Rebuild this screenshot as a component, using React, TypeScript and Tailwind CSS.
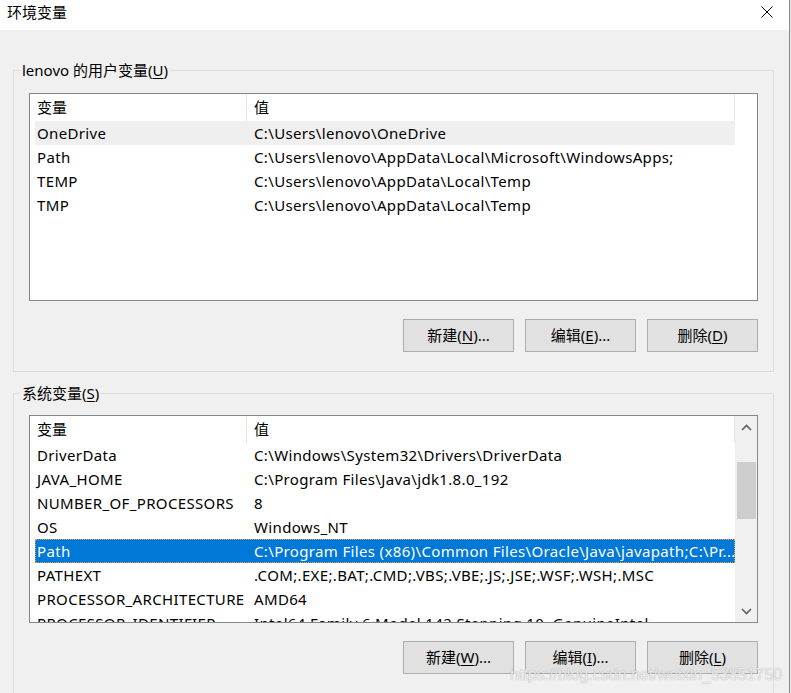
import React from 'react'

const font = { fontFamily: '"Noto Sans", "Noto Sans CJK SC", sans-serif' }

type Row = { name: string; value: string }

const userVars: Row[] = [
  { name: 'OneDrive', value: 'C:\\Users\\lenovo\\OneDrive' },
  { name: 'Path', value: 'C:\\Users\\lenovo\\AppData\\Local\\Microsoft\\WindowsApps;' },
  { name: 'TEMP', value: 'C:\\Users\\lenovo\\AppData\\Local\\Temp' },
  { name: 'TMP', value: 'C:\\Users\\lenovo\\AppData\\Local\\Temp' },
]

const sysVars: Row[] = [
  { name: 'DriverData', value: 'C:\\Windows\\System32\\Drivers\\DriverData' },
  { name: 'JAVA_HOME', value: 'C:\\Program Files\\Java\\jdk1.8.0_192' },
  { name: 'NUMBER_OF_PROCESSORS', value: '8' },
  { name: 'OS', value: 'Windows_NT' },
  { name: 'Path', value: 'C:\\Program Files (x86)\\Common Files\\Oracle\\Java\\javapath;C:\\Pr...' },
  { name: 'PATHEXT', value: '.COM;.EXE;.BAT;.CMD;.VBS;.VBE;.JS;.JSE;.WSF;.WSH;.MSC' },
  { name: 'PROCESSOR_ARCHITECTURE', value: 'AMD64' },
  { name: 'PROCESSOR_IDENTIFIER', value: 'Intel64 Family 6 Model 142 Stepping 10, GenuineIntel' },
]

function Btn({ label, hot, tail }: { label: string; hot: string; tail: string }) {
  return (
    <button className="w-[111px] h-[33px] bg-[#e1e1e1] border border-[#adadad] text-[15px] text-black flex items-center justify-center">
      {label}(<span className="underline underline-offset-2">{hot}</span>){tail}
    </button>
  )
}

function VarList({ rows, hover, selected, scroll }: { rows: Row[]; hover?: number; selected?: number; scroll?: boolean }) {
  return (
    <div className="w-[729px] h-[208px] border border-[#828790] bg-white flex overflow-hidden">
      <div className="w-[705px] flex flex-col overflow-hidden">
        <div className="h-[27px] shrink-0 flex items-center pl-[7px] border-r border-[#e5e5e5] text-[15px]">
          <div className="w-[210px] h-full flex items-center border-r border-[#e5e5e5]">变量</div>
          <div className="pl-[7px]">值</div>
        </div>
        {rows.map((r, i) => (
          <div
            key={r.name}
            className={
              'h-[24px] shrink-0 ml-[5px] flex items-center pl-[2px] text-[15px] tracking-[0.35px] whitespace-nowrap ' +
              (i === selected
                ? 'bg-[#0078d7] text-white outline-1 outline-dotted outline-[#f0a040] -outline-offset-1'
                : i === hover
                ? 'bg-[#efefef] text-black'
                : 'text-black')
            }
          >
            <div className="w-[217px] shrink-0">{r.name}</div>
            <div className="overflow-hidden">{r.value}</div>
          </div>
        ))}
      </div>
      {scroll ? (
        <div className="w-[22px] bg-[#f0f0f0] flex flex-col items-center">
          <div className="h-[22px] flex items-center justify-center">
            <svg width="11" height="7" viewBox="0 0 11 7">
              <path d="M1 6 L5.5 1.5 L10 6" stroke="#606060" strokeWidth="1.6" fill="none" />
            </svg>
          </div>
          <div className="h-[24px]" />
          <div className="w-[19px] h-[57px] bg-[#cdcdcd]" />
          <div className="flex-1" />
          <div className="h-[22px] flex items-center justify-center">
            <svg width="11" height="7" viewBox="0 0 11 7">
              <path d="M1 1 L5.5 5.5 L10 1" stroke="#606060" strokeWidth="1.6" fill="none" />
            </svg>
          </div>
        </div>
      ) : null}
    </div>
  )
}

export default function App() {
  return (
    <div className="w-[791px] h-[693px] flex overflow-hidden relative" style={font}>
      <div className="w-[789px] h-full flex flex-col overflow-hidden">
        {/* title bar */}
        <div className="h-[30px] shrink-0 bg-white flex items-center justify-between pl-[7px] pr-[16px]">
          <span className="text-[15px] text-black -mt-[6px]">环境变量</span>
          <svg width="12" height="12" viewBox="0 0 12 12" className="-mt-[6px]">
            <path d="M0.5 0.5 L11.5 11.5 M11.5 0.5 L0.5 11.5" stroke="#000" strokeWidth="1" />
          </svg>
        </div>

        {/* body */}
        <div className="flex-1 bg-[#f0f0f0] flex flex-col">
          <fieldset className="mt-[30px] ml-[13px] w-[761px] h-[312px] border border-[#dcdcdc] pl-[15px] shrink-0">
            <legend className="-ml-[9px] px-[2px] text-[15px] leading-[20px] text-black">
              lenovo 的用户变量(<span className="underline underline-offset-2">U</span>)
            </legend>
            <div className="mt-[13px]">
              <VarList rows={userVars} hover={0} />
            </div>
            <div className="mt-[18px] w-[729px] flex justify-end gap-[11px]">
              <Btn label="新建" hot="N" tail="..." />
              <Btn label="编辑" hot="E" tail="..." />
              <Btn label="删除" hot="D" tail="" />
            </div>
          </fieldset>

          <fieldset className="mt-[11px] ml-[13px] w-[761px] h-[400px] border border-[#dcdcdc] pl-[15px] shrink-0">
            <legend className="-ml-[9px] px-[2px] text-[15px] leading-[20px] text-black">
              系统变量(<span className="underline underline-offset-2">S</span>)
            </legend>
            <div className="mt-[12px]">
              <VarList rows={sysVars} selected={4} scroll />
            </div>
            <div className="mt-[18px] w-[729px] flex justify-end gap-[11px]">
              <Btn label="新建" hot="W" tail="..." />
              <Btn label="编辑" hot="I" tail="..." />
              <Btn label="删除" hot="L" tail="" />
            </div>
          </fieldset>
        </div>
      </div>
      <div className="w-[1px] h-full bg-[#8a8a8a]" />
      <div className="w-[1px] h-full bg-[#e8e8e8]" />

      {/* watermark */}
      <div
        className="absolute left-[510px] top-[665px] text-[16px] leading-[20px] text-white/75 whitespace-nowrap pointer-events-none"
        style={{ fontFamily: '"Liberation Sans", Arial, sans-serif', textShadow: '0 0 1px rgba(120,120,120,0.7)' }}
      >
        https://blog.csdn.net/weixin_53851750
      </div>
    </div>
  )
}
